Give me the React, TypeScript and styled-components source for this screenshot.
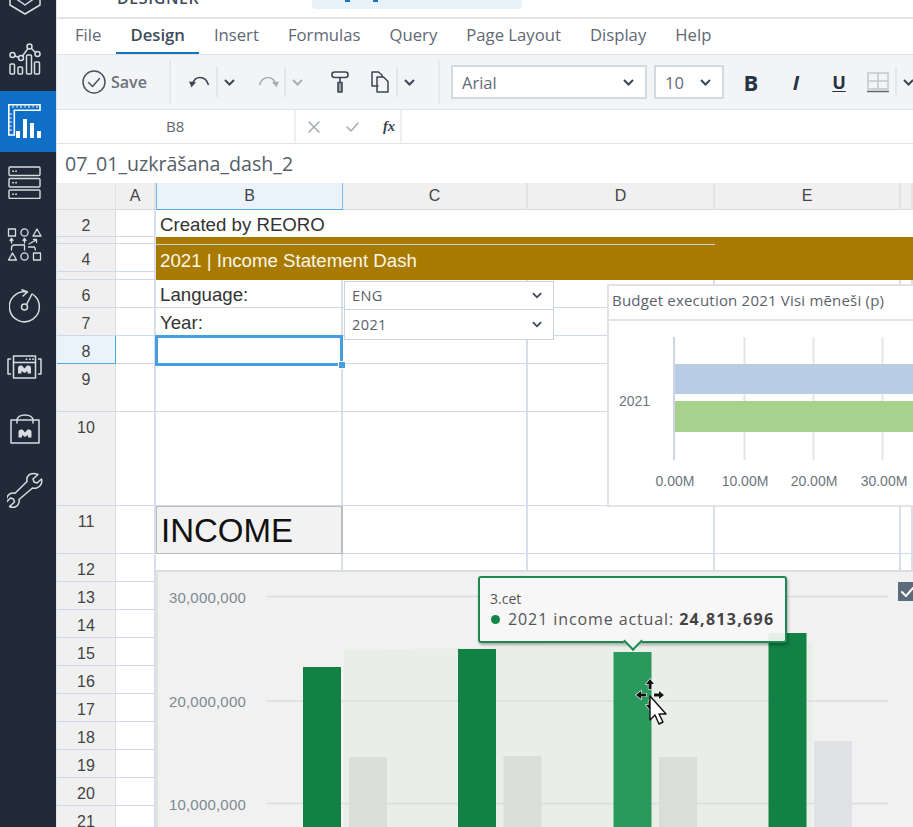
import React from "react";
import styled, { createGlobalStyle } from "styled-components";

const UI = `"Open Sans", "Noto Sans", sans-serif`;
const ARIAL = `"Liberation Sans", Arial, sans-serif`;

const Global = createGlobalStyle`
  html, body { margin: 0; padding: 0; background: #fff; overflow: hidden; }
  #root { width: 913px; height: 827px; overflow: hidden; }
  * { box-sizing: border-box; }
`;

const Page = styled.div`
  width: 913px; height: 827px; display: flex; overflow: hidden; font-family: ${UI};
`;
const Sidebar = styled.nav`
  width: 57px; flex: none; background: #202a39; border-right: 1px solid #dfe3e8;
  display: flex; flex-direction: column;
`;
const NavCap = styled.div`
  height: 29px; display: flex; align-items: flex-start; justify-content: center; overflow: hidden; padding-right: 7px;
`;
const NavItem = styled.div<{ $active?: boolean }>`
  height: 61.5px; display: flex; align-items: center; justify-content: center; padding-right: 7px;
  background: ${(p) => (p.$active ? "#0f6fc6" : "transparent")};
`;
const Main = styled.div`
  flex: 1; min-width: 0; display: flex; flex-direction: column;
`;
const TopBar = styled.header`
  height: 19px; flex: none; border-bottom: 2px solid #e1e5e9; display: flex; overflow: hidden; padding-left: 60px;
`;
const AppName = styled.div`
  width: 195px; margin-top: -12px; line-height: 20px; font-size: 16px; font-weight: 600; letter-spacing: 0.6px; color: #3f4a57;
`;
const SearchPill = styled.div`
  width: 210px; height: 9px; background: #e8f2fb; border-radius: 0 0 4px 4px; display: flex; gap: 23px; padding-left: 33px;
`;
const PillMark = styled.span`
  width: 5px; height: 1.5px; background: #1272c4;
`;
const MenuBar = styled.div`
  height: 36px; flex: none; border-bottom: 1px solid #dfe2e6; display: flex; padding-left: 3.5px;
`;
const MenuTab = styled.div<{ $active?: boolean }>`
  height: 35px; padding: 0 14.5px; font-size: 16.7px; line-height: 31px;
  font-weight: ${(p) => (p.$active ? 600 : 400)};
  color: ${(p) => (p.$active ? "#3d4b5a" : "#5f6873")};
  border-bottom: 2px solid ${(p) => (p.$active ? "#1272c4" : "transparent")};
`;
const Toolbar = styled.div`
  height: 55px; flex: none; background: #f3f4f6; border-bottom: 1px solid #dfe2e6; display: flex; align-items: center; overflow: hidden;
`;
const SaveButton = styled.div`
  width: 112px; flex: none; height: 100%; padding-left: 25px; display: flex; align-items: center; gap: 5px;
  font-size: 16px; font-weight: 600; color: #6a727d;
`;
const Divider = styled.span`
  width: 2px; height: 44px; background: #e6e8eb; flex: none;
`;
const ThinSep = styled.span`
  width: 2px; height: 30px; background: #e3e5e9; flex: none;
`;
const Spacer = styled.span<{ $w: number }>`
  width: ${(p) => p.$w}px; flex: none;
`;
const Tool = styled.div<{ $w: number }>`
  width: ${(p) => p.$w}px; height: 30px; flex: none; display: flex; align-items: center; justify-content: center;
`;
const Select = styled.div<{ $w: number; $mr: number }>`
  width: ${(p) => p.$w}px; margin-right: ${(p) => p.$mr}px; height: 34px; flex: none; background: #fff;
  border: 2px solid #d3d9e0; display: flex; align-items: center; justify-content: space-between;
  padding: 0 11px 0 9px; font-size: 16.5px; color: #616a75;
`;
const FormatLetter = styled.span<{ $w: number; $size: number; $italic?: boolean; $under?: boolean }>`
  width: ${(p) => p.$w}px; flex: none; text-align: center; font-size: ${(p) => p.$size}px; font-weight: 700; color: #263342;
  font-style: ${(p) => (p.$italic ? "italic" : "normal")};
  text-decoration: ${(p) => (p.$under ? "underline" : "none")};
  text-underline-offset: 2px;
`;
const FormulaBar = styled.div`
  height: 34px; flex: none; border-bottom: 1px solid #dfe2e6; display: flex; align-items: stretch;
`;
const CellRef = styled.div`
  width: 239px; border-right: 2px solid #eceef0; padding-left: 109px; line-height: 33px; font-size: 15px; color: #5d6671;
`;
const FormulaTools = styled.div`
  width: 106px; border-right: 2px solid #eceef0; display: flex; align-items: center;
`;
const FormulaTool = styled.span<{ $w: number }>`
  width: ${(p) => p.$w}px; flex: none; display: flex; justify-content: center;
`;
const FxLabel = styled.span`
  font-family: "Liberation Serif", serif; font-style: italic; font-weight: 700; font-size: 14.5px; color: #39434f;
`;
const TitleRow = styled.div`
  height: 39px; flex: none; padding-left: 8px; line-height: 40px; font-size: 19.6px; color: #565e68;
`;
const SheetArea = styled.div`
  position: relative; flex: 1; min-height: 0; overflow: hidden;
`;
const SheetGrid = styled.div`
  display: grid;
  grid-template-columns: 59px 40px 187px 185px 187px 186px 12px;
  grid-template-rows: 27px 27px 7px 28px 8px 28px 28px 28px 48px 94px 48px repeat(10, 28px);
  font-family: ${ARIAL};
`;
const Corner = styled.div`
  background: #f0f0f0; border-right: 1px solid #e2e2e2; border-bottom: 1px solid #dcdcdc;
`;
const ColHead = styled.div<{ $active?: boolean }>`
  display: flex; align-items: center; justify-content: center; font-size: 16px; color: #444;
  background: ${(p) => (p.$active ? "#eaf3fb" : "#f0f0f0")};
  border-right: ${(p) => (p.$active ? "1px solid #7db9e8" : "2px solid #e2e2e2")};
  border-left: ${(p) => (p.$active ? "1px solid #7db9e8" : "0")};
  border-bottom: 1px solid ${(p) => (p.$active ? "#58a6e0" : "#d5d9dd")};
`;
const RowHead = styled.div<{ $active?: boolean }>`
  text-align: center; font-size: 16px; line-height: 28px; padding-top: 2px; color: #444; overflow: hidden;
  background: ${(p) => (p.$active ? "#eaf3fb" : "#f0f0f0")};
  border-right: 1px solid ${(p) => (p.$active ? "#58a6e0" : "#dcdcdc")};
  border-bottom: 1px solid ${(p) => (p.$active ? "#58a6e0" : "#cfd8e8")};
`;
const Cell = styled.div`
  border-right: 2px solid #d8dfec; border-bottom: 1px solid #d0d9e8; background: #fff;
  padding-left: 4px; font-size: 18.67px; line-height: 30px; color: #333; white-space: nowrap; overflow: hidden;
`;
const WideCell = styled(Cell)`
  grid-column: span 5; border-right: 0; border-bottom: 0; line-height: 29px;
`;
const GoldBand = styled.div`
  position: relative; grid-column: span 5; grid-row: span 3; background: #a87b00; color: #fbf6e8;
  padding-left: 4px; font-size: 18.67px; line-height: 47px; white-space: nowrap;
`;
const GoldRule = styled.span`
  position: absolute; left: 0; top: 7px; width: 559px; height: 1px; background: #c9d2e0;
`;
const IncomeCell = styled(Cell)`
  background: #f2f2f2; border: 1px solid #bdbdbd; border-right-width: 2px; font-size: 33px; line-height: 48px; color: #111;
`;
const Dropdown = styled.div<{ $top: number; $h: number }>`
  position: absolute; left: 287px; top: ${(p) => p.$top}px; width: 210px; height: ${(p) => p.$h}px; background: #fff;
  border: 1px solid #cdd3dd; display: flex; align-items: center; justify-content: space-between;
  padding: 0 11px 0 7px; font-size: 14.5px; letter-spacing: 0.4px; color: #5a6069; font-family: ${UI};
`;
const Selection = styled.div`
  position: absolute; left: 98px; top: 152px; width: 188px; height: 31px; border: 3px solid #459ee0;
`;
const Handle = styled.span`
  position: absolute; right: -6px; bottom: -6px; width: 8px; height: 8px; background: #459ee0; border: 1px solid #fff;
`;
const BudgetPanel = styled.section`
  position: absolute; left: 550px; top: 101px; width: 330px; height: 223px; background: #fff; border: 2px solid #e3e3e3; font-family: ${UI};
`;
const BudgetTitle = styled.div`
  height: 35px; border-bottom: 2px solid #e1e3e6; padding-left: 3px; line-height: 29px; font-size: 15px; letter-spacing: 0.2px; color: #5b626b; white-space: nowrap;
`;
const IncomePanel = styled.section`
  position: absolute; left: 99px; top: 387px; width: 780px; height: 280px; background: #f1f1f1;
  border-top: 2px solid #dedede; border-left: 2px solid #e2e2e2;
`;
const ChartSvg = styled.svg`
  display: block;
`;
const Legend = styled.div`
  position: absolute; left: 740px; top: 10px; width: 19px; height: 19px; background: #5c6b7c; display: flex; align-items: center; justify-content: center;
`;
const Tooltip = styled.div`
  position: absolute; left: 320px; top: 4px; width: 309px; height: 67px; padding: 12px 10px; font-family: ${UI};
  background: rgba(247, 247, 247, 0.92); border: 2px solid #1c8a50; border-radius: 3px;
  box-shadow: 1px 2px 3px rgba(0, 0, 0, 0.3); color: #555;
  &::after {
    content: ""; position: absolute; left: 146px; bottom: -7px; width: 12px; height: 12px; background: #f5f6f4;
    border-right: 2px solid #1c8a50; border-bottom: 2px solid #1c8a50; transform: rotate(45deg);
  }
`;
const TipHead = styled.div`
  font-size: 14px; line-height: 18px; color: #555;
`;
const TipLine = styled.div`
  display: flex; align-items: center; font-size: 16px; line-height: 24px; letter-spacing: 0.9px; white-space: nowrap; margin-top: -1px;
`;
const TipDot = styled.span`
  width: 9px; height: 9px; border-radius: 50%; background: #118546; margin: 0 8px 0 1px; flex: none;
`;
const TipValue = styled.b`
  margin-left: 5px; color: #444; font-weight: 700; letter-spacing: 1.3px;
`;
const CursorArt = styled.svg`
  position: absolute; left: 577px; top: 495px;
`;

const Ic = ({ w = 34, h = 34, vb, children, sw = 1.5, c = "#d9dde2" }: any) => (
  <svg width={w} height={h} viewBox={vb || `0 0 ${w} ${h}`} fill="none" stroke={c} strokeWidth={sw} strokeLinecap="round" strokeLinejoin="round">
    {children}
  </svg>
);

const Chevron = ({ c = "#3b4754", w = 11 }: { c?: string; w?: number }) => (
  <svg width={w} height="7" viewBox="0 0 11 7" fill="none" stroke={c} strokeWidth="2">
    <path d="M1 1l4.5 4.5L10 1" />
  </svg>
);

const GLYPH = "M0 8V2.500C0 1 1 0 2.500 0H4l2.500 3L9 0h1.500C12 0 13 1 13 2.500V8H9.500V5.500L6.500 7.500 3.500 5.500V8z";

const HexIcon = () => (
  <Ic w={32} h={16}><path d="M1 -5V5l15 9 15-9V-5" /><path d="M7.500 -1L16 5l8.500-6" /></Ic>
);
const StatsIcon = () => (
  <Ic w={32} h={33}>
    <circle cx="3.500" cy="12" r="2.500" /><circle cx="12" cy="15" r="2.500" /><circle cx="20.500" cy="3.500" r="2.500" /><circle cx="28.500" cy="11" r="2.500" />
    <path d="M6 13l3.500 1.200M13.500 13l5.500-7.500M22.500 5.500l4 4" />
    <rect x="1" y="21" width="4.500" height="10" rx="1" /><rect x="9" y="24" width="4.500" height="7" rx="1" /><rect x="17.500" y="12" width="5" height="19" rx="1" /><rect x="25.500" y="19" width="5" height="12" rx="1" />
  </Ic>
);
const DesignIcon = () => (
  <svg width="34" height="34" viewBox="0 0 34 34" fill="#fff">
    <path d="M.8.800H32V6.300H6.300V31H.8z" fill="none" stroke="#fff" strokeWidth="1.600" />
    <path d="M5 1.500v2.500M9 1.500v2M13 1.500v2.500M17 1.500v2M21 1.500v2.500M25 1.500v2M29 1.500v2.500M1.500 10h2.500M1.500 14h2M1.500 18h2.500M1.500 22h2M1.500 26h2.500" stroke="#fff" strokeWidth="1" />
    <rect x="8" y="27" width="4" height="7" /><rect x="15" y="15" width="4" height="19" /><rect x="22" y="19" width="4" height="15" /><rect x="29" y="27" width="4" height="7" />
  </svg>
);
const ServerIcon = () => (
  <Ic w={33} h={33} sw={1.400}>
    <rect x="1" y="1" width="31" height="8.500" rx="1" /><rect x="1" y="12.500" width="31" height="8.500" rx="1" /><rect x="1" y="24" width="31" height="8.500" rx="1" />
    <path d="M5 5.200h.1M8 5.200h.1M5 16.700h.1M8 16.700h.1M5 28.200h.1M8 28.200h.1" strokeWidth="1.800" />
  </Ic>
);
const FlowIcon = () => (
  <Ic w={35} h={33} sw={1.300}>
    <rect x="1.500" y="1" width="7" height="7" /><circle cx="17.500" cy="4.500" r="3.600" /><path d="M26 8l4-7 4 7z" />
    <path d="M1.500 32l4-7 4 7z" /><circle cx="17.500" cy="28.500" r="3.600" /><rect x="26.500" y="25" width="7" height="7" />
    <path d="M4.500 15v-4M3 12.500l1.500-2 1.500 2M17.500 15v-4M16 12.500l1.500-2 1.500 2M4.500 22v-2c0-2 1.500-3 3-3h10M17.500 17v5M22 16l7-4M26.500 11.500h3v3M21.500 19h6l1 3" />
  </Ic>
);
const GaugeIcon = () => (
  <Ic w={32} h={34}>
    <path d="M18 3A15 15 0 1 0 24 5.500" /><path d="M13 .800L18.500 3 14 7" /><circle cx="15.500" cy="18" r="3" /><path d="M17.500 15.500L23 5" />
  </Ic>
);
const WindowIcon = () => (
  <Ic w={35} h={24}>
    <rect x="6.500" y="1" width="22" height="22" /><path d="M6.500 7.500h22" /><path d="M19.500 4.200h.1M23 4.200h.1M26 4.200h.1" strokeWidth="1.800" />
    <path d="M3.500 4H1v15h2.500M31.500 4H34v15h-2.500" />
    <path d={GLYPH} transform="translate(11 10.500)" fill="#d9dde2" stroke="none" />
  </Ic>
);
const BagIcon = () => (
  <Ic w={30} h={30}>
    <rect x="1" y="6" width="28" height="23" /><path d="M7 9V6.500C7 3 10.500 1 15 1s8 2 8 5.500V9" />
    <path d={GLYPH} transform="translate(8.500 15.500)" fill="#d9dde2" stroke="none" />
  </Ic>
);
const WrenchIcon = () => (
  <Ic w={36} h={36}>
    <path d="M31 2.500l-5 4.500 1 3 3 1 4.500-4c1 4-1 8-5 9-1.500.4-3 .2-4 0L12 27.500c.5 3-1 6-4 7.500-2 .6-4 .4-5.500-.5l5-4.500-1-3-3-1-4 4c-.6-3 .6-7 4-8.500 1.500-.6 3-.6 4.500-.2L20 9.500c-.6-3 .6-6 3.500-7.500 2.500-.8 5-.5 7.500.5z" />
  </Ic>
);

const INK = "#3a4653";
const GREY = "#a7adb4";
const SaveIcon = () => (
  <Ic w={24} h={24} c="#4a5561"><circle cx="12" cy="12" r="11" /><path d="M6.500 12.500l4 4 7-8" /></Ic>
);
const UndoIcon = ({ c }: { c: string }) => (
  <svg width="21" height="12" viewBox="0 0 21 12" fill="none" stroke={c} strokeWidth="1.700">
    <path d="M3.500 8C5 3 8 1.500 11 1.500c4 0 7 2.500 8.500 7.500" /><path d="M0 5.500l7 .8-4.500 5z" fill={c} stroke="none" />
  </svg>
);
const RedoIcon = ({ c }: { c: string }) => (
  <svg width="21" height="12" viewBox="0 0 21 12" fill="none" stroke={c} strokeWidth="1.700">
    <path d="M17.500 8C16 3 13 1.500 10 1.500c-4 0-7 2.500-8.500 7.500" /><path d="M21 5.500l-7 .8 4.500 5z" fill={c} stroke="none" />
  </svg>
);
const RollerIcon = () => (
  <Ic w={18} h={22} c={INK} sw={1.600}><rect x="1" y="1" width="16" height="5.500" rx="2.500" /><path d="M9 6.500v5" /><rect x="7" y="11.500" width="4" height="9.500" fill="#9aa1a9" /></Ic>
);
const CopyIcon = () => (
  <Ic w={18} h={22} c={INK} sw={1.500}><path d="M7 15H1V1h6.500L11 4v2" /><path d="M6 6h6.500L17 10.500V21H6z" /></Ic>
);
const BorderIcon = () => (
  <svg width="22" height="21" viewBox="0 0 22 21" fill="none" stroke="#c4c8ce" strokeWidth="1.500">
    <path d="M1 1h20v16H1zM11 1v16M1 9h20" /><path d="M0 19.500h22" stroke="#5c6570" />
  </svg>
);

const rows: [string, boolean?][] = [
  ["2"], ["3"], ["4"], ["5"], ["6"], ["7"], ["8", true], ["9"], ["10"], ["11"],
  ["12"], ["13"], ["14"], ["15"], ["16"], ["17"], ["18"], ["19"], ["20"], ["21"],
];
const hiddenLabels = new Set(["3", "5"]);

function rowCells(label: string) {
  const plain = (k: string) => <Cell key={`${label}${k}`} />;
  const rest = (from: string[]) => from.map(plain);
  switch (label) {
    case "2":
      return [plain("A"), <WideCell key="2B">Created by REORO</WideCell>];
    case "3":
      return [plain("A"), <GoldBand key="gold"><GoldRule />2021 | Income Statement Dash</GoldBand>];
    case "4":
    case "5":
      return [plain("A")];
    case "6":
      return [plain("A"), <Cell key="6B">Language:</Cell>, ...rest(["C", "D", "E", "F"])];
    case "7":
      return [plain("A"), <Cell key="7B">Year:</Cell>, ...rest(["C", "D", "E", "F"])];
    case "11":
      return [plain("A"), <IncomeCell key="11B">INCOME</IncomeCell>, ...rest(["C", "D", "E", "F"])];
    default:
      return rest(["A", "B", "C", "D", "E", "F"]);
  }
}

const bars = [
  { x: 303, top: 667, grey: 349, gTop: 757, fill: "#118144", gFill: "#d9dedb" },
  { x: 458, top: 649, grey: 503.5, gTop: 756, fill: "#118144", gFill: "#d9dedb" },
  { x: 613.5, top: 652, grey: 659, gTop: 757, fill: "#2a9a5c", gFill: "#d9dedb" },
  { x: 768.5, top: 633, grey: 814, gTop: 741, fill: "#118144", gFill: "#e0e1e5" },
];

export default function App() {
  return (
    <Page>
      <Global />
      <Sidebar>
        <NavCap><HexIcon /></NavCap>
        <NavItem><StatsIcon /></NavItem>
        <NavItem $active><DesignIcon /></NavItem>
        <NavItem><ServerIcon /></NavItem>
        <NavItem><FlowIcon /></NavItem>
        <NavItem><GaugeIcon /></NavItem>
        <NavItem><WindowIcon /></NavItem>
        <NavItem><BagIcon /></NavItem>
        <NavItem><WrenchIcon /></NavItem>
      </Sidebar>
      <Main>
        <TopBar>
          <AppName>DESIGNER</AppName>
          <SearchPill><PillMark /><PillMark /></SearchPill>
        </TopBar>
        <MenuBar>
          {["File", "Design", "Insert", "Formulas", "Query", "Page Layout", "Display", "Help"].map((t) => (
            <MenuTab key={t} $active={t === "Design"}>{t}</MenuTab>
          ))}
        </MenuBar>
        <Toolbar>
          <SaveButton><SaveIcon />Save</SaveButton>
          <Divider />
          <Spacer $w={11} />
          <Tool $w={34}><UndoIcon c={INK} /></Tool>
          <ThinSep />
          <Tool $w={22}><Chevron /></Tool>
          <Spacer $w={12} />
          <Tool $w={32}><RedoIcon c={GREY} /></Tool>
          <ThinSep />
          <Tool $w={22}><Chevron c={GREY} /></Tool>
          <Spacer $w={19} />
          <Tool $w={26}><RollerIcon /></Tool>
          <Spacer $w={13} />
          <Tool $w={27}><CopyIcon /></Tool>
          <Spacer $w={3} />
          <ThinSep />
          <Tool $w={22}><Chevron /></Tool>
          <Spacer $w={18} />
          <Divider />
          <Spacer $w={11} />
          <Select $w={196} $mr={7}>Arial<Chevron /></Select>
          <Select $w={70} $mr={10}>10<Chevron /></Select>
          <FormatLetter $w={34} $size={22}>B</FormatLetter>
          <Spacer $w={11} />
          <FormatLetter $w={34} $size={20} $italic>I</FormatLetter>
          <Spacer $w={9} />
          <FormatLetter $w={34} $size={18} $under>U</FormatLetter>
          <Spacer $w={5} />
          <Tool $w={34}><BorderIcon /></Tool>
          <ThinSep />
          <Tool $w={22}><Chevron /></Tool>
        </Toolbar>
        <FormulaBar>
          <CellRef>B8</CellRef>
          <FormulaTools>
            <FormulaTool $w={36}>
              <Ic w={12} h={12} c="#a6abb2"><path d="M1 1l10 10M11 1L1 11" /></Ic>
            </FormulaTool>
            <FormulaTool $w={40}>
              <Ic w={13} h={11} c="#a6abb2"><path d="M1 6l4 4 7-8" /></Ic>
            </FormulaTool>
            <FormulaTool $w={34}><FxLabel>fx</FxLabel></FormulaTool>
          </FormulaTools>
        </FormulaBar>
        <TitleRow>07_01_uzkrāšana_dash_2</TitleRow>
        <SheetArea>
          <SheetGrid>
            <Corner />
            {["A", "B", "C", "D", "E", ""].map((c) => (
              <ColHead key={c} $active={c === "B"}>{c}</ColHead>
            ))}
            {rows.map(([label, active]) => (
              <React.Fragment key={label}>
                <RowHead $active={active}>{hiddenLabels.has(label) ? "" : label}</RowHead>
                {rowCells(label)}
              </React.Fragment>
            ))}
          </SheetGrid>

          <Dropdown $top={98} $h={29}>ENG<Chevron w={10} /></Dropdown>
          <Dropdown $top={126} $h={31}>2021<Chevron w={10} /></Dropdown>
          <Selection><Handle /></Selection>

          <BudgetPanel>
            <BudgetTitle>Budget execution 2021 Visi mēneši (p)</BudgetTitle>
            <ChartSvg width="326" height="184" viewBox="609 321 326 184" fontFamily={ARIAL} fontSize="14" fill="#6c757d">
              <path d="M744.500 337v123M813.500 337v123M882.500 337v123" stroke="#e5e5e5" strokeWidth="2" />
              <path d="M674 337v123" stroke="#ccd4e6" strokeWidth="2" />
              <rect x="675" y="364" width="270" height="30" fill="#b8cce4" />
              <rect x="675" y="401" width="270" height="31" fill="#a9d18e" />
              <text x="619" y="406">2021</text>
              <text x="675" y="486" textAnchor="middle">0.00M</text>
              <text x="745" y="486" textAnchor="middle">10.00M</text>
              <text x="814" y="486" textAnchor="middle">20.00M</text>
              <text x="884" y="486" textAnchor="middle">30.00M</text>
            </ChartSvg>
          </BudgetPanel>

          <IncomePanel>
            <ChartSvg width="760" height="260" viewBox="158 572 760 260" fontFamily={ARIAL} fontSize="15" letterSpacing="0.2" fill="#7c8a92">
              <path d="M344 650L812 642V830H344z" fill="#e9eee8" />
              <path d="M267 596.500H888M267 701H888M267 803.500H888" stroke="#dcdcdc" strokeWidth="1.500" />
              <text x="246" y="603" textAnchor="end">30,000,000</text>
              <text x="246" y="707" textAnchor="end">20,000,000</text>
              <text x="246" y="810" textAnchor="end">10,000,000</text>
              {bars.map((b) => (
                <React.Fragment key={b.x}>
                  <rect x={b.x} y={b.top} width="38" height={830 - b.top} fill={b.fill} />
                  <rect x={b.grey} y={b.gTop} width="38" height={830 - b.gTop} fill={b.gFill} />
                </React.Fragment>
              ))}
            </ChartSvg>
            <Legend>
              <Ic w={13} h={11} c="#fff" sw={2}><path d="M1 6l4 4 7-8" /></Ic>
            </Legend>
            <Tooltip>
              <TipHead>3.cet</TipHead>
              <TipLine><TipDot />2021 income actual:<TipValue>24,813,696</TipValue></TipLine>
            </Tooltip>
          </IncomePanel>

          <CursorArt width="40" height="52" viewBox="0 0 40 52">
            <g fill="#111" stroke="#fff" strokeWidth="1.200" paintOrder="stroke">
              <path d="M16 1l-4 5h2.500v5h3V6H20zM2 17l5-4v2.500h5v3H7V21zM30 17l-5-4v2.500h-5v3h5V21zM16 32l-4-5h2.500v-4h3v4H20z" />
            </g>
            <path d="M16 18v24l5-5 4 9 4-2-4-8h7z" fill="#fff" stroke="#111" strokeWidth="1.400" strokeLinejoin="round" />
          </CursorArt>
        </SheetArea>
      </Main>
    </Page>
  );
}
